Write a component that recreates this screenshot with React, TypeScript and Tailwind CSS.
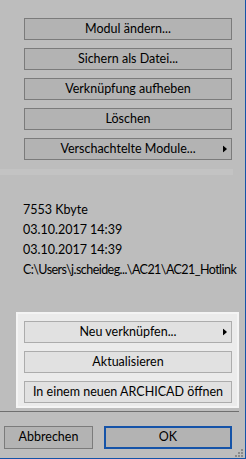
import React from 'react';

const font = { fontFamily: 'Lato, "Noto Sans", sans-serif' };

function Arrow() {
  return (
    <svg width="4" height="7" viewBox="0 0 4 7" className="absolute right-[4px] top-1/2 -translate-y-1/2">
      <path d="M0 0 L4 3.5 L0 7 Z" fill="#000" />
    </svg>
  );
}

// Gray button on the dark panel
function PanelButton({ label, arrow }: { label: string; arrow?: boolean }) {
  return (
    <div className="relative h-[22px] flex items-center justify-center border border-[#7b7b7b] bg-[#b3b3b3] text-[12.5px] text-black">
      {label}
      {arrow && <Arrow />}
    </div>
  );
}

// Lighter button inside the white group
function LightButton({ label, arrow }: { label: string; arrow?: boolean }) {
  return (
    <div className="relative h-[22px] flex items-center justify-center border border-[#acacac] bg-[#e1e1e1] text-[12.5px] text-black">
      {label}
      {arrow && <Arrow />}
    </div>
  );
}

export default function App() {
  return (
    <div
      className="w-[246px] h-[459px] bg-[#bdbdbd] border-r border-b border-[#1553a8] flex flex-col overflow-hidden"
      style={font}
    >
      {/* Module actions */}
      <div className="pt-[18px] pl-[24px] pr-[13px] flex flex-col gap-[8px]">
        <PanelButton label="Modul ändern..." />
        <PanelButton label="Sichern als Datei..." />
        <PanelButton label="Verknüpfung aufheben" />
        <PanelButton label="Löschen" />
        <PanelButton label="Verschachtelte Module..." arrow />
      </div>

      {/* faint separator band */}
      <div className="mt-[9px] h-[6px] w-[233px] bg-[#c3c3c3]" />

      {/* Info lines */}
      <div className="mt-[25px] pl-[23px] flex flex-col text-[12.5px] leading-[20px] text-black">
        <span>7553 Kbyte</span>
        <span>03.10.2017 14:39</span>
        <span>03.10.2017 14:39</span>
        <span className="whitespace-nowrap tracking-[-0.55px]">C:\Users\j.scheideg...\AC21\AC21_Hotlink</span>
      </div>

      {/* Hotlink group */}
      <div className="mt-[32px] ml-[16px] w-[223px] h-[96px] border-2 border-[#f4f4f4] bg-[#ebebeb] pt-[7px] pl-[6px] pr-[5px] flex flex-col gap-[8px]">
        <LightButton label="Neu verknüpfen..." arrow />
        <LightButton label="Aktualisieren" />
        <LightButton label="In einem neuen ARCHICAD öffnen" />
      </div>

      <div className="mt-[3px] h-px w-[239px] bg-[#6f6f6f]" />

      {/* Dialog buttons */}
      <div className="relative mt-[14px] pl-[4px] flex gap-[11px]">
        <div className="w-[89px] h-[23px] flex items-center justify-center border border-[#7b7b7b] bg-[#b3b3b3] text-[12.5px] text-black">
          Abbrechen
        </div>
        <div className="w-[128px] h-[23px] flex items-center justify-center border-2 border-[#1553a8] bg-[#b3b3b3] text-[12.5px] text-black">
          OK
        </div>
        <svg width="8" height="8" viewBox="0 0 8 8" className="absolute right-[2px] top-[23px]">
          <rect x="6" y="0" width="2" height="2" fill="#8a8a8a" />
          <rect x="3" y="3" width="2" height="2" fill="#8a8a8a" />
          <rect x="6" y="3" width="2" height="2" fill="#8a8a8a" />
          <rect x="0" y="6" width="2" height="2" fill="#8a8a8a" />
          <rect x="3" y="6" width="2" height="2" fill="#8a8a8a" />
          <rect x="6" y="6" width="2" height="2" fill="#8a8a8a" />
        </svg>
      </div>
    </div>
  );
}
